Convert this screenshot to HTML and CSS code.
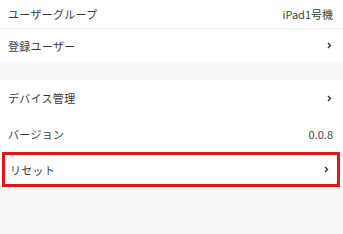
FILE: index.html
```html
<!DOCTYPE html>
<html lang="ja">

<head>

    <meta charset="UTF-8">
    <meta name="viewport" content="width=device-width, initial-scale=1.0">
    <title>設定</title>

    <link rel="stylesheet" href="styles.css">

</head>

<body>

    <div class="group">

        <div class="row row-first">
            <span class="label">ユーザーグループ</span>
            <span class="value">iPad1号機</span>
        </div>

        <div class="row row-second">
            <span class="label">登録ユーザー</span>
            <svg class="chevron" width="5" height="7" viewBox="0 0 5 7"><path d="M1 1 L3.5 3.5 L1 6" fill="none" stroke="#333" stroke-width="1.4"/></svg>
        </div>

    </div>

    <div class="group">

        <div class="row">
            <span class="label">デバイス管理</span>
            <svg class="chevron" width="5" height="7" viewBox="0 0 5 7"><path d="M1 1 L3.5 3.5 L1 6" fill="none" stroke="#333" stroke-width="1.4"/></svg>
        </div>

        <div class="row">
            <span class="label">バージョン</span>
            <span class="value">0.0.8</span>
        </div>

        <div class="row row-reset">
            <span class="label">リセット</span>
            <svg class="chevron" width="5" height="7" viewBox="0 0 5 7"><path d="M1 1 L3.5 3.5 L1 6" fill="none" stroke="#333" stroke-width="1.4"/></svg>
        </div>

    </div>

</body>

</html>
```

FILE: styles.css
```css
body {
    margin: 0;
    background-color: #f8f8f8;
    font-family: "Noto Sans CJK JP", "Noto Sans", sans-serif;
    font-size: 11px;
    color: #3a3a3a;
}

.group {
    background-color: #fff;
    margin-bottom: 18px;
}

.row {
    display: flex;
    justify-content: space-between;
    align-items: center;
    height: 36px;
    padding: 0 10px 0 8px;
}

.row-first {
    height: 28px;
    border-bottom: 1px solid #f3f3f3;
}

.row-second {
    height: 33px;
}

.label {
    letter-spacing: 0.3px;
}

.value {
    color: #444;
}

.chevron {
    margin-right: 1px;
}

.row-reset {
    height: 29px;
    margin: 0 3px 0 2px;
    border: 3px solid #e0161b;
    padding: 0 7px 0 5px;
}
```
